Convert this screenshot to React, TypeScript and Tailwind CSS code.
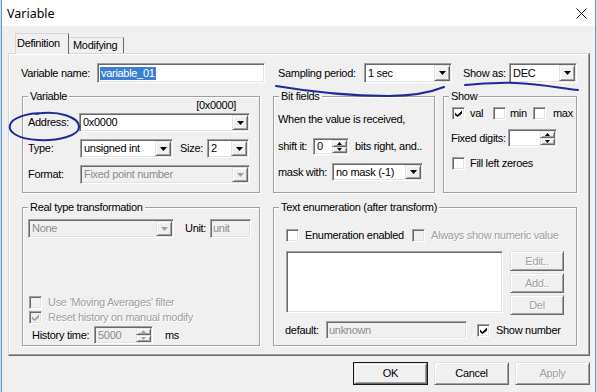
import React from 'react';

const FONT = "font-['Liberation_Sans',Arial,sans-serif] text-[11px] tracking-[-0.3px] leading-[13px]";

const sunken =
  'border border-t-[#a0a0a0] border-l-[#a0a0a0] border-r-white border-b-white shadow-[inset_1px_1px_0_#696969,inset_-1px_-1px_0_#e3e3e3]';
const raised =
  'border border-t-[#e3e3e3] border-l-[#e3e3e3] border-r-[#696969] border-b-[#696969] shadow-[inset_1px_1px_0_#fff,inset_-1px_-1px_0_#a0a0a0]';
const dimText = 'text-[#a0a0a0] [text-shadow:1px_1px_0_#fff]';

const Arrow = ({ disabled, up, small }: { disabled?: boolean; up?: boolean; small?: boolean }) => {
  const w = small ? 5 : 7;
  const h = small ? 3 : 4;
  const d = up ? `M0 ${h}H${w}L${w / 2} 0z` : `M0 0H${w}L${w / 2} ${h}z`;
  return (
    <svg width={w} height={h} viewBox={`0 0 ${w} ${h}`}>
      <path d={d} fill={disabled ? '#a0a0a0' : '#000'} />
    </svg>
  );
};

function Combo({ className = '', text = '', disabled = false }: { className?: string; text?: string; disabled?: boolean }) {
  return (
    <div className={`${sunken} ${className} flex p-px ${disabled ? 'bg-[#f0f0f0]' : 'bg-white'}`}>
      <div className={`flex-1 min-w-0 pl-[2px] flex items-center whitespace-nowrap overflow-hidden ${disabled ? 'text-[#8c8c8c]' : 'text-black'}`}>
        {text}
      </div>
      <div className={`${raised} w-[16px] bg-[#f0f0f0] flex items-center justify-center`}>
        <Arrow disabled={disabled} />
      </div>
    </div>
  );
}

function Field({ className = '', children, disabled = false }: { className?: string; children?: React.ReactNode; disabled?: boolean }) {
  return (
    <div className={`${sunken} ${className} flex items-center pl-[2px] whitespace-nowrap ${disabled ? 'bg-[#f0f0f0] text-[#8c8c8c]' : 'bg-white'}`}>
      {children}
    </div>
  );
}

function Spin({ className = '', text = '', disabled = false }: { className?: string; text?: string; disabled?: boolean }) {
  return (
    <div className={`${sunken} ${className} flex p-px ${disabled ? 'bg-[#f0f0f0]' : 'bg-white'}`}>
      <div className={`flex-1 pl-[2px] flex items-center ${disabled ? 'text-[#8c8c8c]' : ''}`}>{text}</div>
      <div className="w-[15px] flex flex-col">
        <div className={`${raised} flex-1 bg-[#f0f0f0] flex items-center justify-center`}>
          <Arrow up small disabled={disabled} />
        </div>
        <div className={`${raised} flex-1 bg-[#f0f0f0] flex items-center justify-center`}>
          <Arrow small disabled={disabled} />
        </div>
      </div>
    </div>
  );
}

function Check({ checked = false, disabled = false }: { checked?: boolean; disabled?: boolean }) {
  return (
    <div className={`${sunken} w-[13px] h-[13px] shrink-0 flex items-center justify-center ${disabled ? 'bg-[#f0f0f0]' : 'bg-white'}`}>
      {checked && (
        <svg width="7" height="7" viewBox="0 0 7 7">
          <path d="M0 2.5L2.5 5L7 0.5V3.5L2.5 7L0 5z" fill={disabled ? '#a0a0a0' : '#000'} />
        </svg>
      )}
    </div>
  );
}

function Btn({ children, className = '', disabled = false, def = false }: { children: React.ReactNode; className?: string; disabled?: boolean; def?: boolean }) {
  const inner = (
    <div className={`${raised} h-full flex items-center justify-center bg-[#f0f0f0] ${disabled ? dimText : ''}`}>{children}</div>
  );
  if (def) return <div className={`border border-[#1a1a1a] ${className}`}>{inner}</div>;
  return <div className={className}>{inner}</div>;
}

function Group({ title, className = '', right, children }: { title: string; className?: string; right?: React.ReactNode; children?: React.ReactNode }) {
  return (
    <div className={`border border-[#a0a0a0] shadow-[inset_1px_1px_0_#fff,1px_1px_0_#fff] flex flex-col ${className}`}>
      <div className="-mt-[7px] flex items-start justify-between">
        <span className="ml-[5px] px-[2px] bg-[#f0f0f0] whitespace-nowrap">{title}</span>
        {right}
      </div>
      {children}
    </div>
  );
}

export default function App() {
  return (
    <div className={`relative w-[597px] h-[392px] bg-[#d9d9d9] overflow-hidden text-black ${FONT}`}>
      <div className="ml-px w-[595px] h-[392px] border-x border-[#5b9bd5] bg-[#f0f0f0] flex flex-col">
        {/* title bar */}
        <div className="h-[26px] bg-white flex items-center justify-between pl-[5px] pr-[6px]">
          <span className="font-['Noto_Sans',sans-serif] text-[12.5px] tracking-normal">Variable</span>
          <svg width="11" height="11" viewBox="0 0 11 11" className="mr-[2px]">
            <path d="M0.5 0.5L10.5 10.5M10.5 0.5L0.5 10.5" stroke="#111" strokeWidth="1" />
          </svg>
        </div>

        {/* tabs */}
        <div className="mt-[7px] h-[20px] ml-[13px] flex items-end">
          <div className="relative z-10 -mb-px h-[21px] w-[54px] bg-[#f0f0f0] border-t border-l border-t-[#d6d6d6] border-l-[#d6d6d6] border-r border-r-[#696969] pl-[1px] pt-[3px]">
            Definition
          </div>
          <div className="h-[16px] w-[55px] border-t border-t-[#d6d6d6] border-r border-r-[#696969] pl-[4px] pt-[1px]">
            Modifying
          </div>
        </div>

        {/* tab panel */}
        <div className="ml-[6px] w-[582px] h-[303px] border border-t-[#d6d6d6] border-l-[#d6d6d6] border-r-[#696969] border-b-[#696969] shadow-[inset_-1px_-1px_0_#a0a0a0,inset_1px_1px_0_#fff]">
          {/* row 1 */}
          <div className="mt-[9px] pl-[12px] h-[20px] flex items-center">
            <span className="w-[76px]">Variable name:</span>
            <Field className="w-[168px] h-[20px]">
              <span className="bg-[#3b7fd3] text-white px-px">variable_01</span>
            </Field>
            <span className="ml-[13px] w-[86px]">Sampling period:</span>
            <Combo className="w-[88px] h-[20px]" text="1 sec" />
            <span className="ml-[11px] w-[46px]">Show as:</span>
            <Combo className="w-[68px] h-[20px]" text="DEC" />
          </div>

          {/* row 2 */}
          <div className="mt-[13px] pl-[13px] flex">
            <Group title="Variable" className="w-[238px] h-[97px]" right={<span className="mt-[9px] mr-[23px]">[0x0000]</span>}>
              <div className="mt-[1px] pl-[5px] flex items-center">
                <span className="w-[51px]">Address:</span>
                <Combo className="w-[171px] h-[19px]" text="0x0000" />
              </div>
              <div className="mt-[7px] pl-[5px] flex items-center">
                <span className="w-[52px]">Type:</span>
                <Combo className="w-[93px] h-[19px]" text="unsigned int" />
                <span className="ml-[7px] w-[27px]">Size:</span>
                <Combo className="w-[42px] h-[19px]" text="2" />
              </div>
              <div className="mt-[7px] pl-[5px] flex items-center">
                <span className="w-[52px]">Format:</span>
                <Combo className="w-[170px] h-[19px]" text="Fixed point number" disabled />
              </div>
            </Group>

            <Group title="Bit fields" className="ml-[13px] w-[162px] h-[97px]">
              <div className="mt-[10px] pl-[4px]">When the value is received,</div>
              <div className="mt-[12px] pl-[4px] flex items-center">
                <span className="w-[35px]">shift it:</span>
                <Spin className="w-[36px] h-[17px]" text="0" />
                <span className="ml-[6px]">bits right, and..</span>
              </div>
              <div className="mt-[8px] pl-[4px] flex items-center">
                <span className="w-[54px]">mask with:</span>
                <Combo className="w-[91px] h-[18px]" text="no mask (-1)" />
              </div>
            </Group>

            <Group title="Show" className="ml-[8px] w-[134px] h-[97px]">
              <div className="mt-[4px] pl-[8px] flex items-center">
                <Check checked />
                <span className="ml-[5px] w-[23px]">val</span>
                <Check />
                <span className="ml-[4px] w-[23px]">min</span>
                <Check />
                <span className="ml-[7px]">max</span>
              </div>
              <div className="mt-[9px] pl-[7px] flex items-center">
                <span className="w-[57px]">Fixed digits:</span>
                <Spin className="w-[49px] h-[18px]" />
              </div>
              <div className="mt-[10px] pl-[8px] flex items-center">
                <Check />
                <span className="ml-[5px]">Fill left zeroes</span>
              </div>
            </Group>
          </div>

          {/* row 3 */}
          <div className="mt-[14px] pl-[13px] flex">
            <Group title="Real type transformation" className="w-[238px] h-[139px]">
              <div className="mt-[5px] pl-[5px] flex items-center">
                <Combo className="w-[146px] h-[19px]" text="None" disabled />
                <span className="ml-[11px] w-[25px]">Unit:</span>
                <Field className="w-[41px] h-[19px]" disabled>unit</Field>
              </div>
              <div className="mt-auto pl-[6px] flex items-center">
                <Check disabled />
                <span className={`ml-[6px] ${dimText}`}>Use 'Moving Averages' filter</span>
              </div>
              <div className="mt-[2px] pl-[6px] flex items-center">
                <Check checked disabled />
                <span className={`ml-[6px] ${dimText}`}>Reset history on manual modify</span>
              </div>
              <div className="mt-[2px] mb-[1px] pl-[9px] flex items-center">
                <span className="w-[62px]">History time:</span>
                <Spin className="w-[59px] h-[18px]" text="5000" disabled />
                <span className="ml-[12px]">ms</span>
              </div>
            </Group>

            <Group title="Text enumeration (after transform)" className="ml-[13px] w-[304px] h-[139px]">
              <div className="mt-[15px] pl-[12px] flex items-center">
                <Check />
                <span className="ml-[6px] w-[107px]">Enumeration enabled</span>
                <Check disabled />
                <span className={`ml-[6px] ${dimText}`}>Always show numeric value</span>
              </div>
              <div className="mt-[9px] pl-[12px] flex items-start">
                <div className={`${sunken} bg-white w-[217px] h-[62px]`} />
                <div className="ml-[7px] flex flex-col gap-[2px]">
                  <Btn className="w-[54px] h-[20px]" disabled>Edit..</Btn>
                  <Btn className="w-[54px] h-[20px]" disabled>Add..</Btn>
                  <Btn className="w-[54px] h-[20px]" disabled>Del</Btn>
                </div>
              </div>
              <div className="mt-[6px] pl-[11px] flex items-center">
                <span className="w-[41px]">default:</span>
                <Field className="w-[141px] h-[18px]" disabled>unknown</Field>
                <span className="ml-[10px]"><Check checked /></span>
                <span className="ml-[6px]">Show number</span>
              </div>
            </Group>
          </div>
        </div>

        {/* dialog buttons */}
        <div className="mt-[6px] pr-[5px] flex justify-end gap-[6px]">
          <Btn className="w-[75px] h-[23px]" def>OK</Btn>
          <Btn className="w-[75px] h-[23px]">Cancel</Btn>
          <Btn className="w-[75px] h-[23px]" disabled>Apply</Btn>
        </div>
      </div>

      {/* pen marks drawn over the screenshot */}
      <svg className="absolute inset-0 pointer-events-none" width="597" height="392" viewBox="0 0 597 392">
        <g fill="none" stroke="#1f2a9a" strokeWidth="2" strokeLinecap="round">
          <path d="M36 114C58 110 79 117 79 127C79 136 58 141 38 140C18 139 8 132 10 125C12 118 26 113 44 113" />
          <path d="M276 86C300 90 340 96 388 96C418 96 434 91 444 87" />
          <path d="M465 85C480 84 498 82 515 83C540 84 560 88 578 90" />
        </g>
      </svg>
    </div>
  );
}
